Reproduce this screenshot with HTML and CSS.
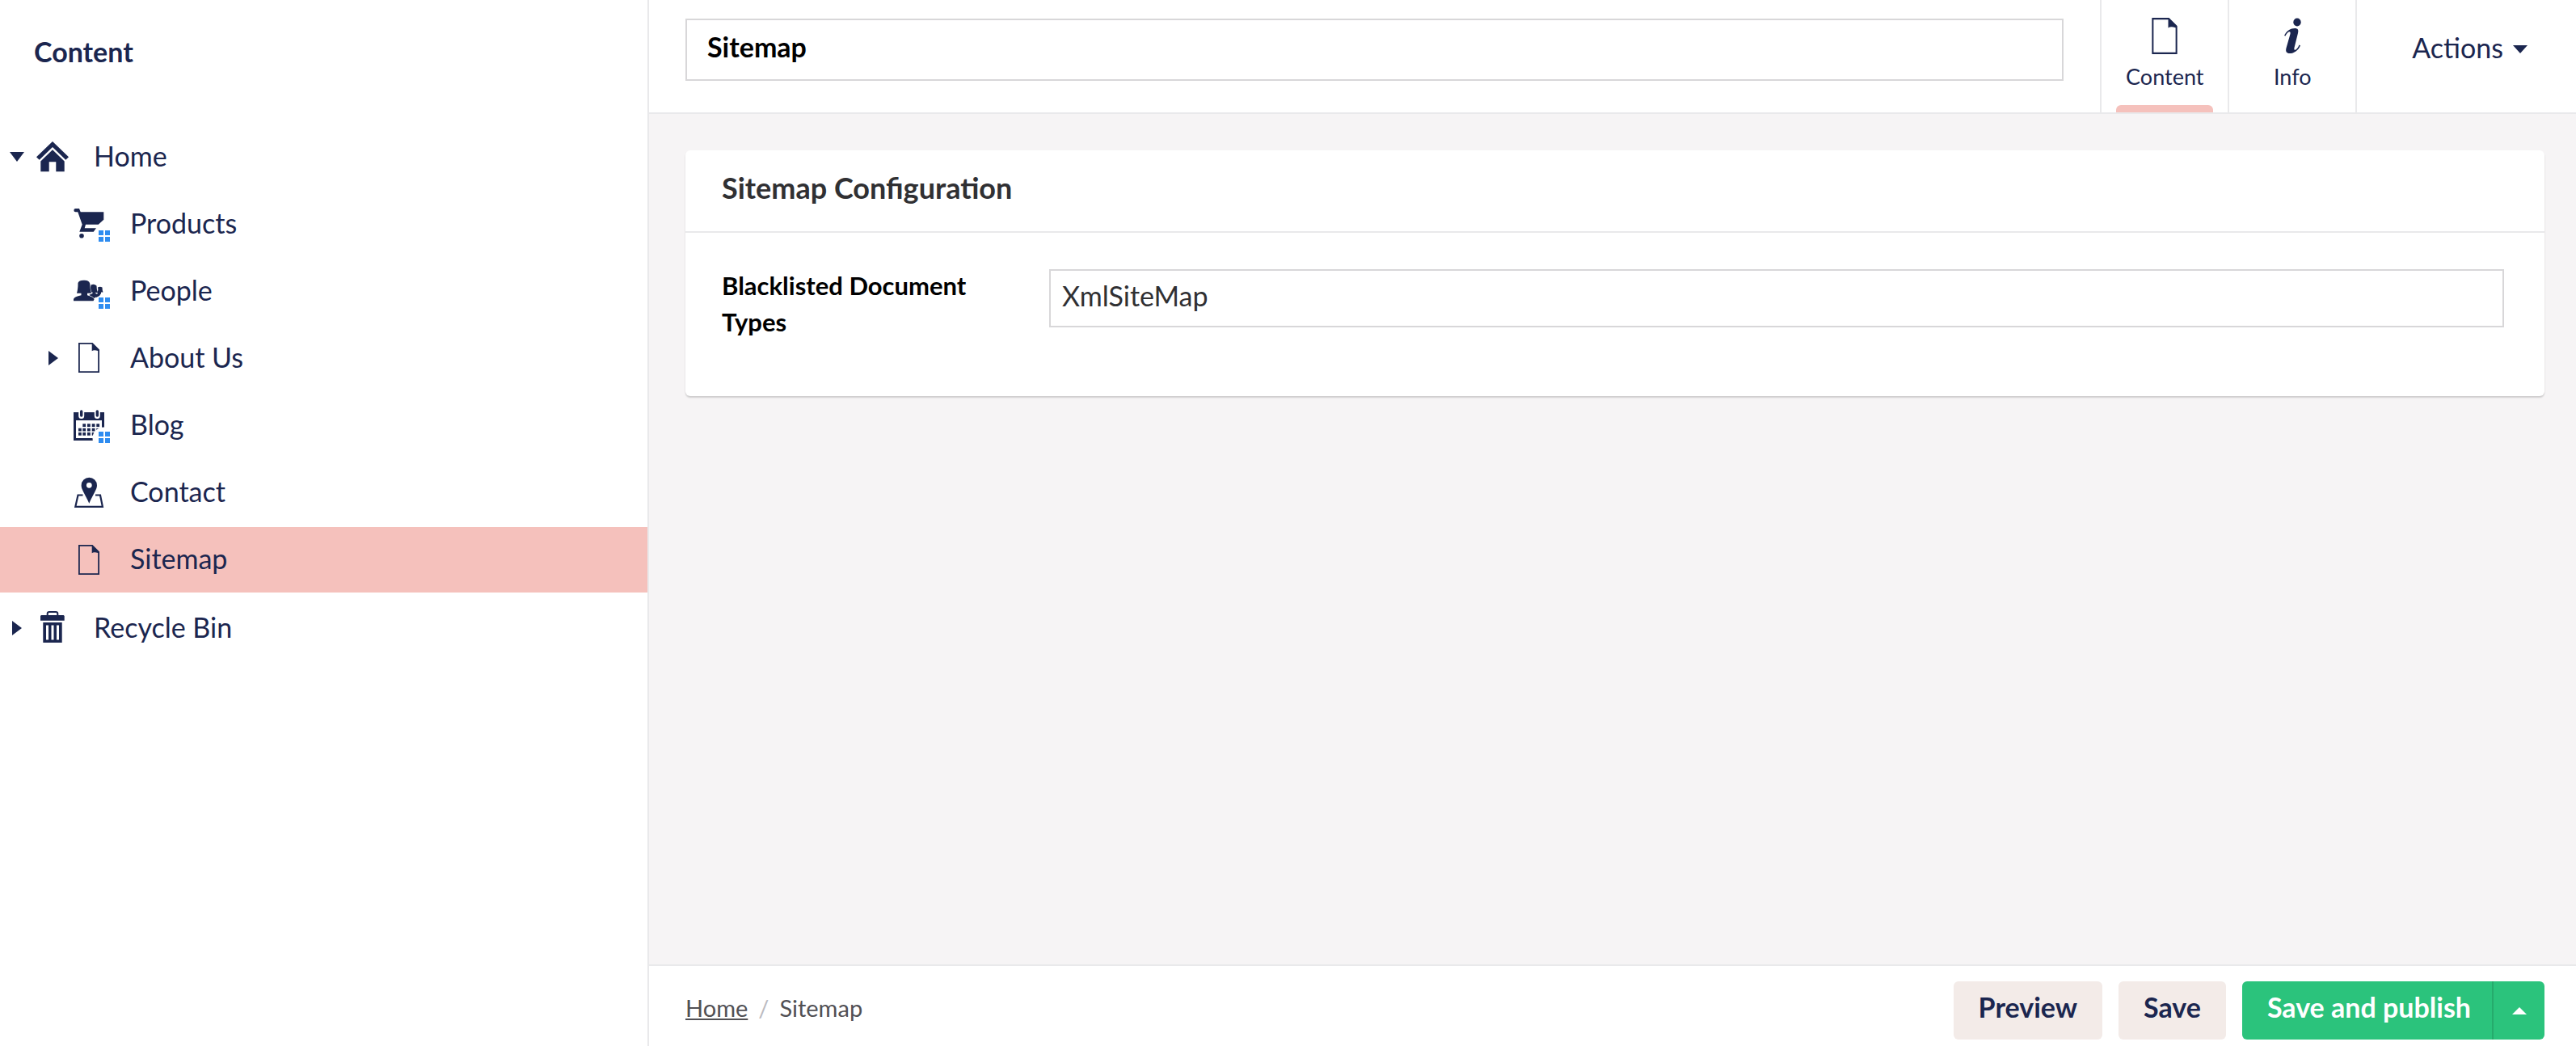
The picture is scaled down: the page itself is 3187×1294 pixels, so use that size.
FILE: index.html
```html
<!DOCTYPE html>
<html lang="en">
<head>
<meta charset="utf-8">
<title>Sitemap - Content</title>
<link rel="stylesheet" href="styles.css">
</head>
<body>
<svg class="symbols" aria-hidden="true">
  <symbol id="caret-down" viewBox="0 0 18 12"><path d="M0 0H18L9 12Z"/></symbol>
  <symbol id="caret-right" viewBox="0 0 12 18"><path d="M0 0V18L12 9Z"/></symbol>
  <symbol id="document" viewBox="0 0 26 37"><path fill-rule="evenodd" d="M0 0H17.5L26 8.5V37H0ZM1.8 1.8V35.2H24.2V10Q19 8.4 16.7 10.3V1.8Z"/></symbol>
  <symbol id="collection" viewBox="0 0 14 14"><path fill="#2e8cf0" d="M0 0H6V6H0ZM8 0H14V6H8ZM0 8H6V14H0ZM8 8H14V14H8Z"/></symbol>
</svg>
<div class="app">
  <nav class="sidebar" aria-label="Content tree">
    <h1 class="sidebar-title">Content</h1>
    <ul class="tree">
      <li>
        <div class="tree-row">
          <button class="tree-toggle" type="button" aria-label="Collapse Home"><svg width="18" height="12"><use href="#caret-down"/></svg></button>
          <svg class="tree-icon" viewBox="0 0 46 45"><path d="M23 3 43 22.3 39.3 25.7 23 10 6.7 25.7 3 22.3Z"/><path d="M23 13.3 37.7 27.5V40.3H27.3V28.2H18.7V40.3H8.3V27.5Z"/></svg>
          <a class="tree-label" href="#">Home</a>
        </div>
        <ul class="tree-children">
          <li class="tree-row">
            <svg class="tree-icon" viewBox="0 0 46 45"><path d="M6.5 3H11L12.7 7.3H41.3V16.7L34.7 22.7H19L17.7 27.3H32L28.7 31.7H11.3L14.7 22.7 9.3 7.3H6.5A2 2 0 0 1 6.5 3Z"/><circle cx="14" cy="36.7" r="2.8"/><use href="#collection" x="35" y="30" width="14" height="14"/></svg>
            <a class="tree-label" href="#">Products</a>
          </li>
          <li class="tree-row">
            <svg class="tree-icon" viewBox="0 0 46 45"><path d="M33 23.5Q35 22 34 17.5Q36.5 15.8 39.5 17.5Q39.5 22 40.5 23.5H38V25L36 28 32 30 29 28 34 25Z"/><path d="M25.5 14.5Q29.5 12.5 32.5 15.5Q32.5 21 34 24H30.5L33.5 26.5 30 31 23 27 27.5 25V23.5H24Z"/><path class="knockout" d="M9.5 12Q11 8.5 17 8.8 23 8.5 24.3 13 24.2 20 26 24.7H21V27.2Q29.5 29.5 29.5 32.5L28.5 34.3H4V32Q5 28.8 13.5 27.2V24.7H8Q9.5 20 9.5 12Z"/><use href="#collection" x="35" y="30" width="14" height="14"/></svg>
            <a class="tree-label" href="#">People</a>
          </li>
          <li class="tree-row">
            <button class="tree-toggle" type="button" aria-label="Expand About Us"><svg width="12" height="18"><use href="#caret-right"/></svg></button>
            <svg class="tree-icon" viewBox="0 0 46 45"><use href="#document" x="10" y="3" width="26" height="37"/></svg>
            <a class="tree-label" href="#">About Us</a>
          </li>
          <li class="tree-row">
            <svg class="tree-icon" viewBox="0 0 46 45"><path fill-rule="evenodd" d="M4 6H42V41H4ZM7 16V38H39V16Z"/><path d="M15.3 20.3h3.8v3.8h-3.8zM21 20.3h3.8v3.8h-3.8zM26.7 20.3h3.8v3.8h-3.8zM32.3 20.3h3.8v3.8h-3.8zM10 25.7h3.8v3.8h-3.8zM15.3 25.7h3.8v3.8h-3.8zM21 25.7h3.8v3.8h-3.8zM26.7 25.7h3.8v3.8h-3.8zM32.3 25.7h3.8v3.8h-3.8zM10 31h3.8v3.8h-3.8zM15.3 31h3.8v3.8h-3.8zM21 31h3.8v3.8h-3.8zM26.7 31h3.8v3.8h-3.8z"/><path fill="none" stroke="#fff" stroke-width="7" stroke-linecap="round" d="M13.7 6V10.500M33.300 6V10.500"/><path fill="none" stroke="#1b264f" stroke-width="3.400" stroke-linecap="round" d="M13.700 5V10M33.300 5V10"/><circle fill="#fff" cx="41" cy="38" r="13.500"/><use href="#collection" x="35" y="30" width="14" height="14"/></svg>
            <a class="tree-label" href="#">Blog</a>
          </li>
          <li class="tree-row">
            <svg class="tree-icon" viewBox="0 0 46 45"><path fill="none" stroke="#1b264f" stroke-width="2.200" d="M15.500 25.500H9.500L6.300 39.800H39.900L37 25.500H31"/><path fill-rule="evenodd" d="M23.300 3.700A9.700 9.700 0 0 1 33 13.400C33 18.500 28.500 23.500 23.300 35.700 18 23.500 13.600 18.500 13.600 13.400A9.700 9.700 0 0 1 23.300 3.700ZM23.300 9.900A3.400 3.400 0 1 0 23.300 16.700 3.400 3.400 0 1 0 23.300 9.900Z"/></svg>
            <a class="tree-label" href="#">Contact</a>
          </li>
          <li class="tree-row is-active">
            <svg class="tree-icon" viewBox="0 0 46 45"><use href="#document" x="10" y="4" width="26" height="37"/></svg>
            <a class="tree-label" href="#" aria-current="page">Sitemap</a>
          </li>
        </ul>
      </li>
      <li class="tree-row">
        <button class="tree-toggle" type="button" aria-label="Expand Recycle Bin"><svg width="12" height="18"><use href="#caret-right"/></svg></button>
        <svg class="tree-icon" viewBox="0 0 46 45"><path fill="none" stroke="#1b264f" stroke-width="2" d="M16.700 7V4Q16.700 2 19 2H27Q29.300 2 29.300 4V7"/><path d="M9 6H36.700L37.700 7V12.700H8V7Z"/><path fill-rule="evenodd" d="M11.300 15H34.700V40H11.300ZM15 18.500V36.500H18V18.500ZM21.500 18.500V36.500H24.500V18.500ZM28 18.500V36.500H31V18.500Z"/></svg>
        <a class="tree-label" href="#">Recycle Bin</a>
      </li>
    </ul>
  </nav>
  <main class="editor">
    <header class="editor-header">
      <div class="name-wrap"><input class="text-input name-input" type="text" aria-label="Name" value="Sitemap"></div>
      <button class="tab is-active" type="button"><svg width="32" height="45" viewBox="0 0 26 37"><use href="#document" width="26" height="37"/></svg>Content</button>
      <button class="tab" type="button"><svg width="32" height="45" viewBox="0 0 32 45"><ellipse cx="22" cy="5.500" rx="4.700" ry="5"/><path d="M6 22C9 16 14 13 19 13 23 13 24 15 23 19L18.500 37C17.800 40 19.500 40.500 21 39 22.500 37.500 23.500 36 24.500 33.500L26 34.200C23.500 40.500 18 44 13 44 8.500 44 7.500 41.500 8.500 37.500L13.500 20C14 17.500 13 17 11.500 17.500 9.500 18.500 8.500 20.500 7.500 22.500Z"/></svg>Info</button>
      <div class="actions"><button class="actions-button" type="button">Actions<svg width="18" height="10" viewBox="0 0 18 10"><path d="M0 0H18L9 10Z"/></svg></button></div>
    </header>
    <div class="editor-body">
      <section class="card">
        <h2 class="card-title">Sitemap Configuration</h2>
        <div class="property">
          <label class="property-label" for="types">Blacklisted Document Types</label>
          <input class="text-input property-input" id="types" type="text" value="XmlSiteMap">
        </div>
      </section>
    </div>
    <footer class="editor-footer">
      <nav class="breadcrumb" aria-label="Breadcrumb"><a href="#">Home</a><span class="separator">/</span><span>Sitemap</span></nav>
      <div class="footer-buttons">
        <button class="button" type="button">Preview</button>
        <button class="button" type="button">Save</button>
        <div class="button-group">
          <button class="button publish" type="button">Save and publish</button>
          <button class="button publish-toggle" type="button" aria-label="More publish options"><svg width="18" height="9" viewBox="0 0 18 9"><path d="M0 9H18L9 0Z"/></svg></button>
        </div>
      </div>
    </footer>
  </main>
</div>
</body>
</html>
```
FILE: styles.css
```css
* {
  box-sizing: border-box;
}

body {
  margin: 0;
  background: #fff;
  color: #1b264f;
  font: 34px/44px Lato, sans-serif;
}

button,
input {
  margin: 0;
  padding: 0;
  border: 0;
  background: none;
  color: inherit;
  font: inherit;
}

svg {
  display: block;
  fill: #1b264f;
}

ul {
  margin: 0;
  padding: 0;
  list-style: none;
}

.symbols {
  position: absolute;
  width: 0;
  height: 0;
}

.app {
  display: flex;
  min-height: 100vh;
}

/* Sidebar tree */
.sidebar {
  flex: none;
  width: 803px;
  border-right: 2px solid #e9e9eb;
}

.sidebar-title {
  margin: 0;
  padding: 42px 42px 68px;
  font-size: 34px;
  font-weight: 700;
}

.tree {
  display: grid;
  gap: 4px;
}

.tree-children {
  display: grid;
  gap: 2px;
  margin-top: 2px;
}

.tree-row {
  display: grid;
  grid-template-columns: 42px 46px 1fr;
  align-items: center;
  height: 81px;
}

.tree-children .tree-row {
  padding-left: 45px;
}

.tree-row.is-active {
  background: #f5c1bc;
}

.tree-toggle {
  display: grid;
  place-items: center;
  height: 100%;
  padding-bottom: 2px;
}

.tree-icon {
  grid-column: 2;
  width: 46px;
  height: 45px;
  overflow: visible;
}

.knockout {
  stroke: #fff;
  stroke-width: 1;
  paint-order: stroke;
}

.tree-label {
  padding: 0 0 4px 28px;
  color: inherit;
  text-decoration: none;
}

/* Editor */
.editor {
  display: flex;
  flex: 1;
  flex-direction: column;
  min-width: 0;
  background: #f6f4f5;
}

.editor-header {
  display: flex;
  height: 141px;
  border-bottom: 2px solid #e9e9eb;
  background: #fff;
}

.name-wrap {
  flex: 1;
  padding: 23px 45px;
}

.text-input {
  width: 100%;
  border: 2px solid #d8d7d9;
  background: #fff;
}

.name-input {
  height: 77px;
  padding: 0 25px 8px;
  color: #000;
  font-weight: 700;
}

.tab {
  position: relative;
  display: flex;
  flex-direction: column;
  align-items: center;
  gap: 10px;
  width: 158px;
  padding-top: 22px;
  border-left: 2px solid #e9e9eb;
  font-size: 27px;
  line-height: 36px;
}

.tab.is-active::after {
  position: absolute;
  right: 18px;
  bottom: 0;
  left: 18px;
  height: 9px;
  border-radius: 6px 6px 0 0;
  background: #f5c1bc;
  content: "";
}

.actions {
  padding: 37px 60px 0 68px;
  border-left: 2px solid #e9e9eb;
}

.actions-button {
  display: flex;
  align-items: center;
  gap: 12px;
}

.actions-button svg {
  margin-top: 4px;
}

.editor-body {
  flex: 1;
  padding: 45px 39px 45px 45px;
}

.card {
  border-radius: 6px;
  background: #fff;
  box-shadow: 0 2px 2px rgba(0, 0, 0, 0.16);
}

.card-title {
  margin: 0;
  padding: 24px 45px 32px;
  border-bottom: 2px solid #e9e9eb;
  color: #303033;
  font-size: 36px;
  font-weight: 700;
}

.property {
  display: flex;
  gap: 45px;
  padding: 43px 50px 69px 45px;
}

.property-label {
  flex: none;
  width: 360px;
  color: #000;
  font-size: 31px;
  font-weight: 700;
  line-height: 45px;
}

.property-input {
  height: 72px;
  margin-top: 2px;
  padding: 0 14px 8px;
  color: #303033;
}

.editor-footer {
  display: flex;
  align-items: flex-start;
  justify-content: space-between;
  padding: 19px 39px 8px 45px;
  border-top: 2px solid #e9e9eb;
  background: #fff;
}

.breadcrumb {
  display: flex;
  gap: 13px;
  padding-top: 11px;
  color: #515054;
  font-size: 29px;
}

.breadcrumb a {
  color: inherit;
}

.separator {
  color: #bbbabf;
}

.footer-buttons {
  display: flex;
  gap: 20px;
}

.button {
  height: 72px;
  padding: 0 31px 8px;
  border-radius: 6px;
  background: #f3ebe8;
  font-weight: 700;
}

.button-group {
  display: flex;
}

.publish {
  padding-right: 26px;
  border-radius: 6px 0 0 6px;
  background: #2bc37c;
  color: #fff;
}

.publish-toggle {
  display: grid;
  place-items: center;
  width: 65px;
  padding: 0;
  border-left: 2px solid #25ab6c;
  border-radius: 0 6px 6px 0;
  background: #2bc37c;
}

.publish-toggle svg {
  fill: #fff;
}
```
